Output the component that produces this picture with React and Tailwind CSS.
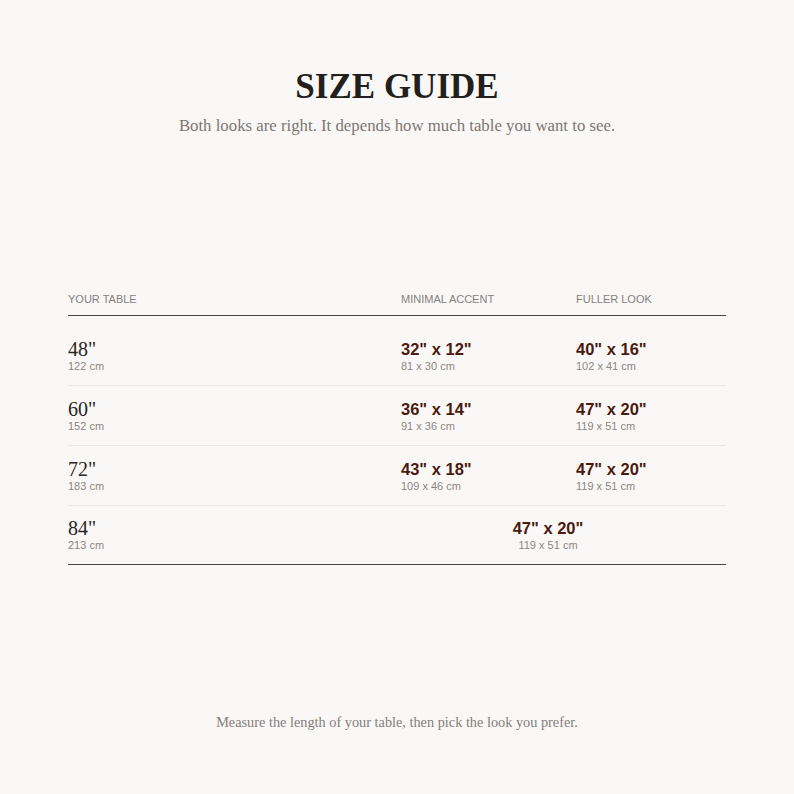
import React from "react";

const rows = [
  { inch: '48"', cm: "122 cm", min: ['32" x 12"', "81 x 30 cm"], full: ['40" x 16"', "102 x 41 cm"] },
  { inch: '60"', cm: "152 cm", min: ['36" x 14"', "91 x 36 cm"], full: ['47" x 20"', "119 x 51 cm"] },
  { inch: '72"', cm: "183 cm", min: ['43" x 18"', "109 x 46 cm"], full: ['47" x 20"', "119 x 51 cm"] },
];

const serif = "font-['Liberation_Serif','Times_New_Roman',serif]";
const sans = "font-['Liberation_Sans',Arial,sans-serif]";

function Size({ value, sub }) {
  return (
    <div className="flex flex-col">
      <span className={`${sans} text-[16.5px] leading-[20px] font-bold text-[#4a1a10]`}>{value}</span>
      <span className={`${sans} text-[11px] leading-[14px] text-[#8c8683]`}>{sub}</span>
    </div>
  );
}

function TableCell({ inch, cm }) {
  return (
    <div className="flex flex-col">
      <span className={`${serif} text-[20px] leading-[20px] text-[#2a2523]`}>{inch}</span>
      <span className={`${sans} text-[11px] leading-[14px] text-[#8c8683]`}>{cm}</span>
    </div>
  );
}

export default function App() {
  return (
    <div className="min-h-[794px] w-full bg-[#faf8f6] flex flex-col items-center">
      {/* heading */}
      <h1 className={`${serif} mt-[67px] text-[35px] leading-[40px] font-bold text-[#231f1c]`}>
        SIZE GUIDE
      </h1>
      <p className={`${serif} mt-[7px] text-[16.8px] leading-[24px] text-[#7d7673]`}>
        Both looks are right. It depends how much table you want to see.
      </p>

      {/* size table */}
      <div className="mt-[154px] w-[658px]">
        <div className={`grid grid-cols-[333px_175px_150px] pb-[9px] border-b border-[#4a4746] ${sans} text-[11px] leading-[14px] text-[#85807d]`}>
          <span>YOUR TABLE</span>
          <span>MINIMAL ACCENT</span>
          <span>FULLER LOOK</span>
        </div>

        {rows.map((r, i) => (
          <div
            key={r.inch}
            className={`grid grid-cols-[333px_175px_150px] items-center border-b border-[#ebe7e4] ${i === 0 ? "h-[70px] pt-[10px]" : "h-[60px]"}`}
          >
            <TableCell inch={r.inch} cm={r.cm} />
            <Size value={r.min[0]} sub={r.min[1]} />
            <Size value={r.full[0]} sub={r.full[1]} />
          </div>
        ))}

        <div className="grid grid-cols-[333px_175px_150px] items-center h-[59px] border-b border-[#4a4746]">
          <TableCell inch={'84"'} cm="213 cm" />
          <div className="col-span-2 flex flex-col items-center pr-[31px]">
            <span className={`${sans} text-[16.5px] leading-[20px] font-bold text-[#4a1a10]`}>47" x 20"</span>
            <span className={`${sans} text-[11px] leading-[14px] text-[#8c8683]`}>119 x 51 cm</span>
          </div>
        </div>
      </div>

      <p className={`${serif} mt-[147px] text-[14.3px] leading-[20px] text-[#847d7a]`}>
        Measure the length of your table, then pick the look you prefer.
      </p>
    </div>
  );
}
